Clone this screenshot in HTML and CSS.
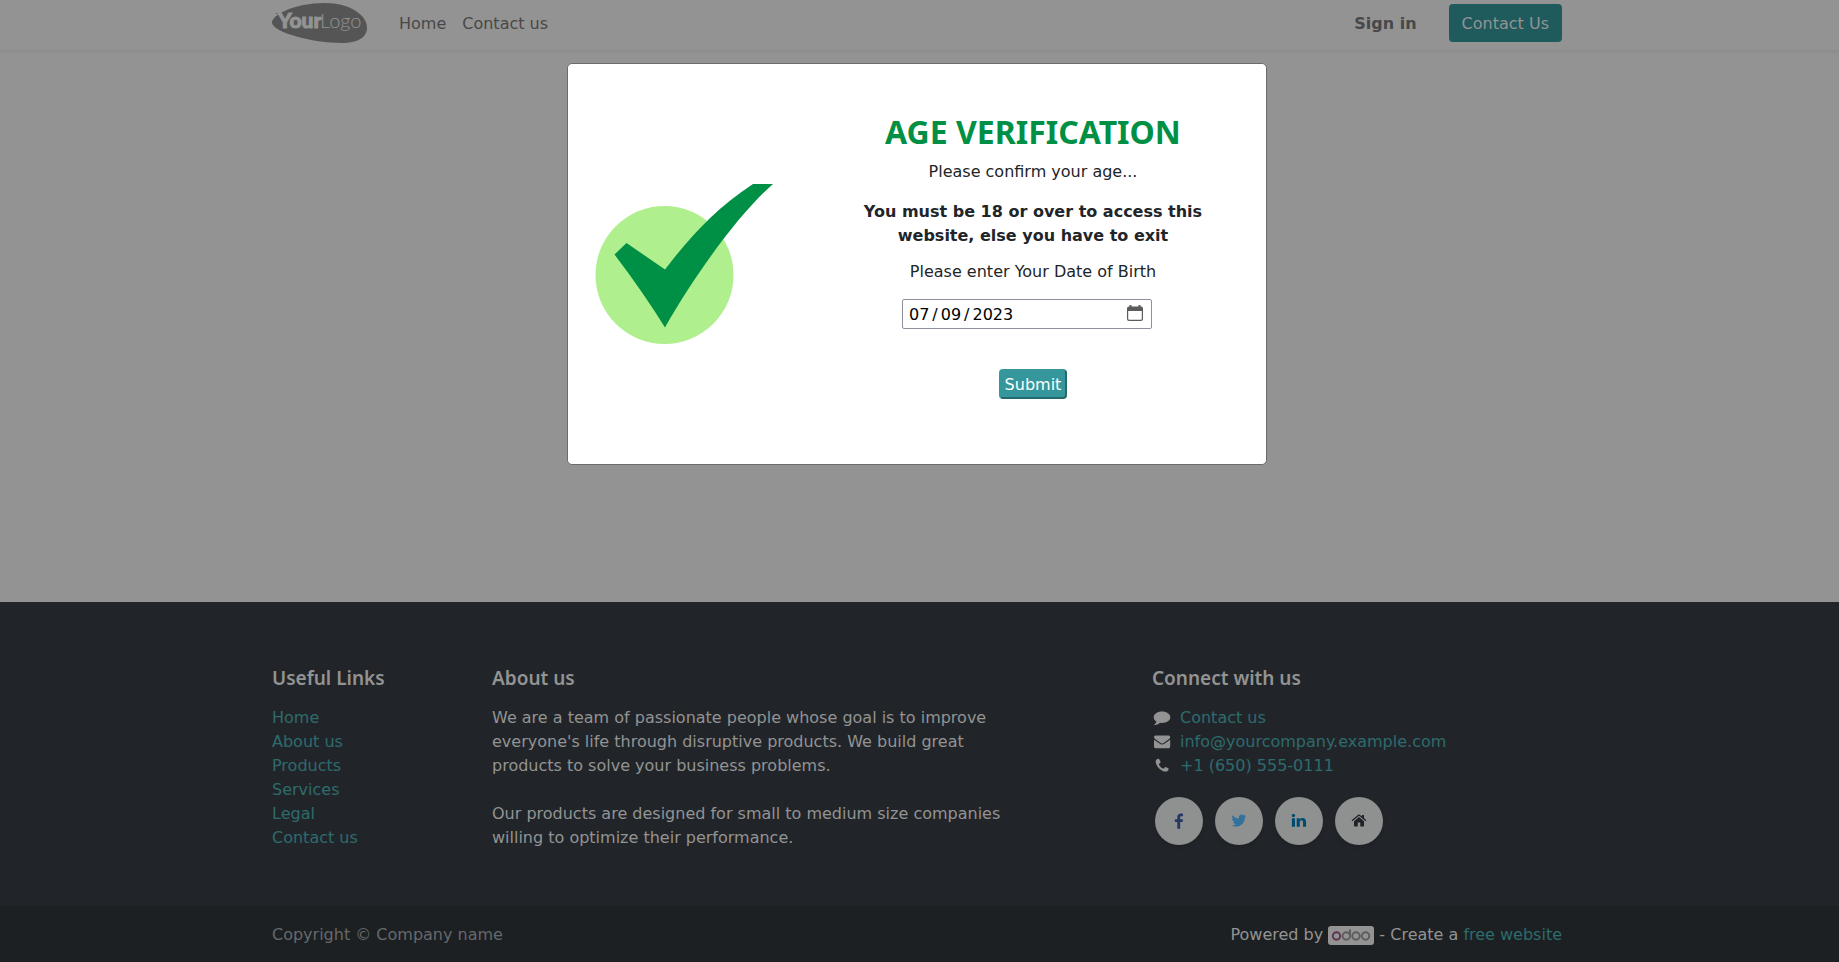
FILE: index.html
```html
<!DOCTYPE html>
<html lang="en-US">
<head>
<meta charset="utf-8">
<title>Home | My Website</title>
<link rel="stylesheet" href="styles.css">
</head>
<body>
<div class="page">
  <header class="header">
    <nav class="container navbar">
      <a class="brand" href="#" aria-label="Your Logo">
        <svg class="brand-logo" width="95" height="40" viewBox="0 0 95 40">
          <path d="M0 19.500C0 12 22 0 53 0C78 0 95 12 95 25C95 35 84 40 70 40C40 40 0 29 0 19.500Z" fill="#555"/>
          <path d="M4 10.500H11" stroke="#555" stroke-width="1"/>
          <text class="logo-bold" x="6" y="25">Your</text>
          <text class="logo-thin" x="48" y="25">Logo</text>
        </svg>
      </a>
      <a class="nav-link" href="#">Home</a>
      <a class="nav-link" href="#">Contact us</a>
      <a class="nav-link sign-in" href="#">Sign in</a>
      <a class="btn-contact" href="#">Contact Us</a>
    </nav>
  </header>
  <main class="main"></main>
  <footer class="footer">
    <div class="footer-top">
    <div class="container footer-grid">
      <section>
        <h5 class="footer-title">Useful Links</h5>
        <ul class="links">
          <li><a href="#">Home</a></li>
          <li><a href="#">About us</a></li>
          <li><a href="#">Products</a></li>
          <li><a href="#">Services</a></li>
          <li><a href="#">Legal</a></li>
          <li><a href="#">Contact us</a></li>
        </ul>
      </section>
      <section class="about">
        <h5 class="footer-title">About us</h5>
        <p>We are a team of passionate people whose goal is to improve everyone's life through disruptive products. We build great products to solve your business problems.</p>
        <p>Our products are designed for small to medium size companies willing to optimize their performance.</p>
      </section>
      <section class="connect">
        <h5 class="footer-title">Connect with us</h5>
        <ul class="links contact-list">
          <li><svg class="icon" width="20" height="16" viewBox="0 0 20 16"><path d="M10 1.500C14.800 1.500 18.300 4 18.300 7.300S14.800 13 10 13C9.300 13 8.600 12.900 8 12.800C6.500 14.200 4.600 15 2.700 15C2.300 15 2.200 14.600 2.600 14.300C3.600 13.500 4.200 12.600 4.400 11.600C2.800 10.500 1.700 9 1.700 7.300C1.700 4 5.200 1.500 10 1.500Z"/></svg><a href="#">Contact us</a></li>
          <li><svg class="icon" width="20" height="16" viewBox="0 0 20 16"><path d="M2 3.200Q2 1.500 3.600 1.500H16.600Q18.200 1.500 18.200 3.200Q18.200 4.300 16.800 5.300L11.600 9Q10.100 10 8.600 9L3.400 5.300Q2 4.300 2 3.200ZM2 5.700L7.500 9.600Q10.100 11.300 12.700 9.600L18.200 5.700V12.600Q18.200 14.200 16.600 14.200H3.600Q2 14.200 2 12.600Z"/></svg><a href="#">info@yourcompany.example.com</a></li>
          <li><svg class="icon" width="20" height="16" viewBox="0 0 20 16"><path d="M7 1C8 2.500 8.600 3.600 8.600 4.200C8.600 5 6.700 5.600 6.900 6.400C7.400 8 9.800 10.300 11.300 10.600C12.200 10.700 12.700 8.900 13.500 8.900C14.200 8.900 16.400 10.200 16.600 10.600C16.800 11.400 16.200 12.700 15.300 13.200C11 15.300 3.500 8.800 3.700 3.200C3.800 1.500 5.800.5 7 1Z"/></svg><a href="#">+1 (650) 555-0111</a></li>
        </ul>
        <div class="social">
          <a href="#" aria-label="Facebook"><svg width="16" height="16" viewBox="0 0 16 16"><path fill="#263764" d="M12 .7V3.200H10.500C9.400 3.200 9.200 3.700 9.200 4.500V6.200H12L11.600 8.900H9.200V15.800H6.300V8.900H3.900V6.200H6.300V4.100C6.300 1.700 7.800.5 9.900.5C10.900.5 11.700.6 12 .7Z"/></svg></a>
          <a href="#" aria-label="Twitter"><svg width="16" height="16" viewBox="0 0 16 16"><path fill="#34729d" d="M15.300 3C14.900 3.600 14.400 4.100 13.800 4.500C14 9.700 10 13.600 5.200 13.600C3.500 13.600 1.900 13.100.6 12.200C2.200 12.400 3.700 11.900 4.900 11C3.600 11 2.500 10.100 2.100 8.900C2.600 9 3.100 9 3.500 8.800C2.100 8.500 1.100 7.300 1.100 5.800C1.500 6 2 6.200 2.500 6.200C1.100 5.300.7 3.500 1.600 2.200C3.100 4.100 5.300 5.200 7.800 5.400C7.300 3.400 8.800 1.600 10.700 1.600C11.600 1.600 12.300 1.900 12.900 2.500C13.600 2.400 14.200 2.100 14.800 1.800C14.600 2.500 14.200 3 13.600 3.400C14.200 3.400 14.800 3.200 15.300 3Z"/></svg></a>
          <a href="#" aria-label="LinkedIn"><svg width="16" height="16" viewBox="0 0 16 16"><path fill="#004b70" d="M.9 5.200H4V13.800H.9ZM2.500 1C3.500 1 4.200 1.600 4.200 2.500S3.500 4 2.400 4S.7 3.400.7 2.500S1.400 1 2.500 1ZM5.700 5.200H8.700V6.400C9.200 5.700 10 5 11.500 5C13.600 5 15.100 6.300 15.100 8.900V13.800H12V9.200C12 8.100 11.600 7.300 10.500 7.300C9.500 7.300 8.800 8 8.800 9V13.800H5.700Z"/></svg></a>
          <a href="#" aria-label="Website"><svg width="16" height="16" viewBox="0 0 16 16"><path fill="#1f2326" d="M8 4L13 8.200V12.700Q13 13.400 12.300 13.400H9.300V9.600H6.700V13.400H3.700Q3 13.400 3 12.700V8.200ZM8.800 1.700L10.900 3.500V1.900H13V5.100L15.400 7.200L14.600 8.200L8 2.800L1.400 8.200L.6 7.200L7.200 1.700Q8 1.100 8.800 1.700Z"/></svg></a>
        </div>
      </section>
    </div>
    </div>
    <div class="copyright">
      <div class="container copyright-row">
        <span>Copyright © Company name</span>
        <span class="powered">Powered by
          <a class="odoo" href="#" aria-label="Odoo"><svg width="46" height="19" viewBox="0 0 46 19"><rect width="46" height="19" rx="3" fill="#939393"/><g fill="none" stroke="#5c5c5c" stroke-width="1.900"><circle cx="8.500" cy="10" r="3.700" stroke="#5d3450"/><circle cx="18.300" cy="10" r="3.700"/><path d="M22 10V3.500"/><circle cx="28" cy="10" r="3.700"/><circle cx="37.600" cy="10" r="3.700"/></g></svg></a>
          - Create a <a class="free" href="#">free website</a></span>
      </div>
    </div>
  </footer>
</div>
<div class="overlay">
  <div class="modal" role="dialog" aria-modal="true" aria-labelledby="age-title">
    <div class="modal-art">
      <svg width="180" height="162" viewBox="0 0 180 162"><circle cx="69.500" cy="92" r="69" fill="#afef8e"/><path d="M158 1H178C146 29 102 88 70 144.500Q48 109 19.500 71.500L31.500 60L70 86.500C94 55 121 25 158 1Z" fill="#009045"/></svg>
    </div>
    <form class="modal-form">
      <h2 class="modal-title" id="age-title">AGE VERIFICATION</h2>
      <p>Please confirm your age...</p>
      <p class="warning">You must be 18 or over to access this website, else you have to exit</p>
      <label for="dob">Please enter Your Date of Birth</label>
      <div class="date-field">
        <input id="dob" class="date-input" type="date" value="2023-07-09">
        <svg class="calendar" width="18" height="18" viewBox="0 0 18 18"><path fill="#5b5b5b" fill-rule="evenodd" d="M3.500 0H5.500V1.500H12.500V0H14.500V1.500H15Q17 1.500 17 3.500V14Q17 16 15 16H3Q1 16 1 14V3.500Q1 1.500 3 1.500H3.500ZM2.200 6V14Q2.200 14.800 3.200 14.800H14.800Q15.800 14.800 15.800 14V6Z"/></svg>
      </div>
      <button class="submit" type="button">Submit</button>
    </form>
  </div>
</div>
</body>
</html>
```

FILE: styles.css
```css
* { box-sizing: border-box; }

:root { --gutter: 5px; }

body {
  margin: 0;
  font: 16px/24px "DejaVu Sans", sans-serif;
  background: #939393;
  color: #939393;
}

a { color: #2e6b6d; text-decoration: none; }
h2, h5, p, ul { margin: 0; padding: 0; }
svg { display: block; }

.page {
  display: flex;
  flex-direction: column;
  min-height: 100vh;
}

.container {
  width: 100%;
  max-width: 1320px;
  margin: 0 auto;
  padding: 0 15px;
}

.header, .footer-top, .copyright { padding-right: var(--gutter); }

.header {
  border-bottom: 1px solid #8c8c8c;
  box-shadow: 0 2px 3px rgba(0, 0, 0, 0.04);
}

.navbar {
  display: flex;
  align-items: center;
  padding-top: 3px;
  padding-bottom: 7px;
}

.brand { margin-right: 24px; }

.logo-bold {
  font: 900 21px Lato, sans-serif;
  fill: #939393;
  stroke: #939393;
  stroke-width: 1px;
}

.logo-thin { font: 300 20px Lato, sans-serif; fill: #939393; }
.nav-link { padding: 1px 8px 0; color: #484848; }
.sign-in { margin-left: auto; margin-right: 24px; font-weight: bold; }

.btn-contact {
  padding: 8px 13px 6px;
  border-radius: 4px;
  background: #1f5a5d;
  color: #939393;
}

.main { flex: 1; }
.footer { background: #212529; }

.footer-grid {
  display: grid;
  grid-template-columns: minmax(0, 22fr) minmax(0, 66fr) minmax(0, 41fr);
  padding-top: 64px;
  padding-bottom: 56px;
}

.about { padding-right: 136px; }
.about p + p { margin-top: 24px; }

.footer-title {
  margin-bottom: 16px;
  font: 600 19px/24px "Noto Sans", sans-serif;
}

.links { list-style: none; }
.contact-list li { display: flex; align-items: center; gap: 8px; }
.icon { fill: #939393; }
.social { display: flex; gap: 12px; padding: 19px 3px 0; }

.social a {
  display: grid;
  place-items: center;
  width: 48px;
  height: 48px;
  border-radius: 50%;
  background: #8f9191;
  box-shadow: 0 2px 4px rgba(0, 0, 0, 0.12);
}

.copyright { background: #1c2023; color: #66686a; }

.copyright-row {
  display: flex;
  justify-content: space-between;
  padding-top: 17px;
  padding-bottom: 15px;
}

.powered { color: #939393; }
.odoo { display: inline-block; vertical-align: middle; }

.overlay {
  position: absolute;
  inset: 0;
  padding: 63px calc(16px + var(--gutter)) 63px 16px;
}

.modal {
  display: flex;
  width: 100%;
  max-width: 700px;
  min-height: 402px;
  margin: 0 auto;
  border: 1px solid #6b6b6b;
  border-radius: 5px;
  background: #fff;
  color: #212529;
}

.modal-art { flex: 1; padding: 119px 0 0 27px; }

.modal-form {
  display: flex;
  flex-direction: column;
  align-items: center;
  width: 466px;
  padding: 48px 55px;
  text-align: center;
}

.modal-title {
  margin-bottom: 8px;
  color: #009045;
  font: 700 32px/40px "Noto Sans", sans-serif;
}

.warning { margin: 16px 0 12px; font-weight: bold; }

.date-field {
  position: relative;
  width: 250px;
  margin: 15px 12px 40px 0;
}

.date-input {
  display: block;
  width: 100%;
  height: 30px;
  padding: 0 5px;
  border: 1px solid #8f8f9d;
  border-radius: 2px;
  background: #fff;
  color: #000;
  font: 16px "DejaVu Sans", sans-serif;
}

.date-input::-webkit-datetime-edit-text { padding: 0 2px; }
.date-input::-webkit-calendar-picker-indicator { opacity: 0; }

.calendar {
  position: absolute;
  top: 6px;
  right: 8px;
  pointer-events: none;
}

.submit {
  height: 30px;
  padding: 0 4px;
  border: 2px solid;
  border-color: #35979c #226a6d #226a6d #35979c;
  border-radius: 4px;
  background: #35979c;
  color: #fff;
  font: 16px "DejaVu Sans", sans-serif;
}
```
